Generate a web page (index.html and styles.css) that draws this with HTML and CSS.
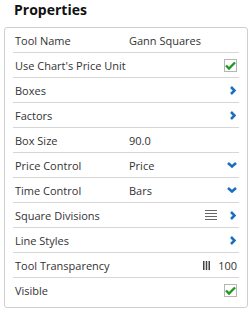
FILE: index.html
```html
<!DOCTYPE html>
<html lang="en">
<head>
    <meta charset="UTF-8">
    <title>Properties</title>
    <link rel="stylesheet" href="styles.css">
</head>
<body>
    <h1 class="title">Properties</h1>

    <div class="panel">
        <div class="row">
            <span class="label">Tool Name</span>
            <span class="value">Gann Squares</span>
        </div>
        <div class="row">
            <span class="label">Use Chart's Price Unit</span>
            <span class="check"><svg width="11" height="9" viewBox="0 0 11 9"><path d="M1 4.5 L4 7.5 L10 1.5" fill="none" stroke="#1f9a1f" stroke-width="2.4"/></svg></span>
        </div>
        <div class="row">
            <span class="label">Boxes</span>
            <span class="chev-right"><svg width="6" height="9" viewBox="0 0 6 9"><path d="M1 1 L4.5 4.5 L1 8" fill="none" stroke="#1b6ec2" stroke-width="2.6"/></svg></span>
        </div>
        <div class="row">
            <span class="label">Factors</span>
            <span class="chev-right"><svg width="6" height="9" viewBox="0 0 6 9"><path d="M1 1 L4.5 4.5 L1 8" fill="none" stroke="#1b6ec2" stroke-width="2.6"/></svg></span>
        </div>
        <div class="row">
            <span class="label">Box Size</span>
            <span class="value">90.0</span>
        </div>
        <div class="row">
            <span class="label">Price Control</span>
            <span class="value">Price</span>
            <span class="chev-down"><svg width="10" height="6" viewBox="0 0 10 6"><path d="M1 1 L5 4.5 L9 1" fill="none" stroke="#1b6ec2" stroke-width="2.6"/></svg></span>
        </div>
        <div class="row">
            <span class="label">Time Control</span>
            <span class="value">Bars</span>
            <span class="chev-down"><svg width="10" height="6" viewBox="0 0 10 6"><path d="M1 1 L5 4.5 L9 1" fill="none" stroke="#1b6ec2" stroke-width="2.6"/></svg></span>
        </div>
        <div class="row">
            <span class="label">Square Divisions</span>
            <span class="lines"><svg width="12" height="10" viewBox="0 0 12 10"><path d="M0 0.5 H12 M0 3.5 H12 M0 6.5 H12 M0 9.5 H12" stroke="#666" stroke-width="1"/></svg></span>
            <span class="chev-right after-icon"><svg width="6" height="9" viewBox="0 0 6 9"><path d="M1 1 L4.5 4.5 L1 8" fill="none" stroke="#1b6ec2" stroke-width="2.6"/></svg></span>
        </div>
        <div class="row">
            <span class="label">Line Styles</span>
            <span class="chev-right"><svg width="6" height="9" viewBox="0 0 6 9"><path d="M1 1 L4.5 4.5 L1 8" fill="none" stroke="#1b6ec2" stroke-width="2.6"/></svg></span>
        </div>
        <div class="row">
            <span class="label">Tool Transparency</span>
            <span class="bars"><svg width="7" height="9" viewBox="0 0 7 9"><path d="M0.75 0 V9 M3.5 0 V9 M6.25 0 V9" stroke="#444" stroke-width="1.5"/></svg></span>
            <span class="number">100</span>
        </div>
        <div class="row">
            <span class="label">Visible</span>
            <span class="check"><svg width="11" height="9" viewBox="0 0 11 9"><path d="M1 4.5 L4 7.5 L10 1.5" fill="none" stroke="#1f9a1f" stroke-width="2.4"/></svg></span>
        </div>
    </div>
</body>
</html>
```

FILE: styles.css
```css
body {
    margin: 0;
    padding: 0 3px 0 4px;
    font-family: 'Open Sans', 'Liberation Sans', sans-serif;
    color: #333;
    background: #fff;
}

.title {
    margin: 0;
    padding: 0 0 0 10px;
    height: 27px;
    line-height: 20px;
    font-size: 14px;
    font-weight: bold;
    color: #111;
}

/* Panel */
.panel {
    border: 1px solid #cfcfcf;
    border-radius: 3px;
    padding: 0 8px 4px 8px;
}

.row {
    display: flex;
    align-items: center;
    height: 25px;
    border-bottom: 1px solid #d6d6d6;
    box-sizing: border-box;
    font-size: 11px;
    padding-left: 2px;
}

.row:last-child {
    border-bottom: none;
}

.label {
    width: 114px;
    flex-shrink: 0;
}

.value {
    flex: 1;
}

.check {
    margin-left: auto;
    width: 11px;
    height: 11px;
    border: 1px solid #b5b5b5;
    display: flex;
    align-items: center;
    justify-content: center;
    margin-right: 2px;
}

.chev-right {
    margin-left: auto;
    display: flex;
    margin-right: 3px;
}

.chev-right.after-icon {
    margin-left: 13px;
}

.chev-down {
    display: flex;
    margin-right: 2px;
}

.lines {
    margin-left: auto;
    display: flex;
}

.bars {
    margin-left: auto;
    display: flex;
    margin-right: 8px;
}

.number {
    margin-right: 2px;
}
```
